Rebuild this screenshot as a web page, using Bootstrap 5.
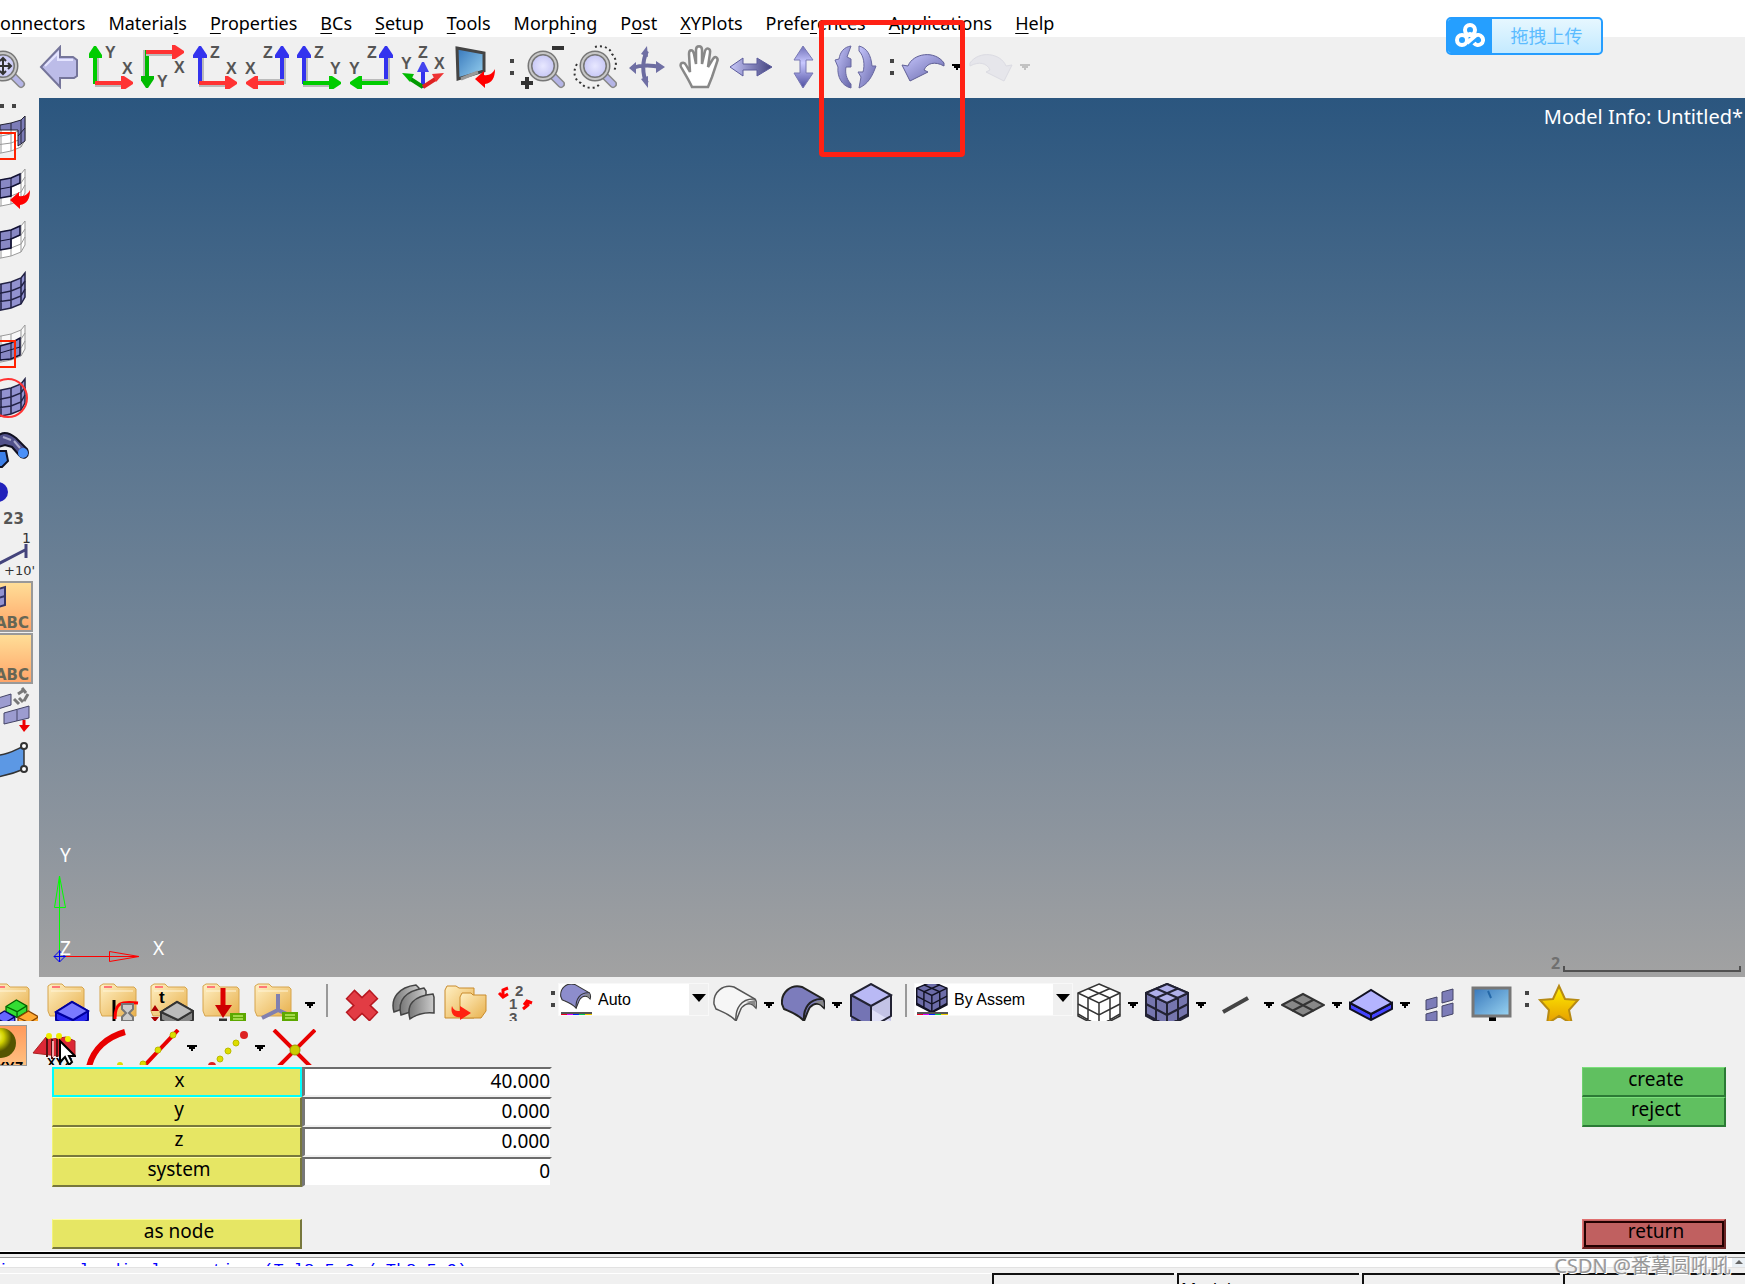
<!DOCTYPE html>
<html lang="en">
<head>
<meta charset="utf-8">
<meta name="viewport" content="width=device-width, initial-scale=1">
<title>Model Info: Untitled*</title>
<link href="https://cdn.jsdelivr.net/npm/bootstrap@5.3.0/dist/css/bootstrap.min.css" rel="stylesheet">
<style>
  body{font-family:"Noto Sans","Noto Sans CJK SC",sans-serif;font-size:18px;line-height:24px;color:#000;background:#f0f0f0}
  svg{display:block;flex:none;overflow:hidden}
  svg text{font-family:"Liberation Sans",sans-serif;font-weight:700}
  .menus{height:37px;gap:23px;padding-top:5px}
  .menus a{color:#000;text-decoration:none;padding:6px 0 0;line-height:24px;white-space:nowrap}
  .menus u{text-underline-offset:3px;text-decoration-thickness:1px}
  .views{height:61px;margin-left:-19px;padding-bottom:2px}
  .tool,.caret{border:0;background:none;padding:0;display:flex;justify-content:center;align-items:center;flex:none}
  .tool{width:52px}
  .caret{width:16px}
  .grip{width:15px;flex:none;display:flex;flex-direction:column;align-items:center;justify-content:center;gap:8px;padding-left:5px}
  .views .grip{width:16px}
  .grip i{width:4px;height:4px;background:#444}
  .side{width:39px;flex:none}
  .side .grip{width:39px;height:15px;flex-direction:row;justify-content:flex-start;padding:0;gap:8px}
  .side .tool{width:39px;height:52px}
  .side svg text{font-family:"DejaVu Sans",sans-serif}
  .stage{background:linear-gradient(#2b567f 0,#5b7690 40%,#8d959e 84%,#a2a2a2 100%)}
  .model-name{color:#fff;font-size:20px;padding:7px 2px}
  .triad{position:absolute;left:1px;bottom:1px}
  .triad text,.ruler text{font-family:"Noto Sans",sans-serif;font-weight:400}
  .ruler{position:absolute;right:4px;bottom:0}
  .upload{position:absolute;top:17px;right:142px;width:157px;height:38px;border:2px solid #259dff;border-radius:5px;background:linear-gradient(#e6f7ff,#c4eaff);color:#5cbcff;padding:0;overflow:hidden}
  .upload .logo{width:44px;height:100%;background:#259fff}
  .marker{position:absolute;left:819px;top:20px;width:146px;height:137px;border:5px solid #ff2114;border-radius:4px;pointer-events:none}
  .display{height:44px;margin-left:-10px;padding-top:6px}
  .create-nodes{height:46px;padding-top:8px}
  .display .tool,.create-nodes .tool{align-items:flex-start}
  .divider{width:17px;flex:none}
  .divider i{display:block;width:2px;height:33px;margin:1px auto;background:#999}
  .combo{height:33px;background:#fff;flex:none;border:1px solid #f8f8f8}
  .combo select{border:0;background:#fff;font:16px/30px "Liberation Sans",sans-serif;appearance:none;padding:1px 0 0 4px;flex:1;min-width:0;color:#000}
  .combo .drop{width:19px;background:#f0f0f0}
  .pressed{width:27px;height:41px;margin-top:-4px;border:1px solid #999;border-left:0;background:linear-gradient(#ff9a5c,#ffc080);flex:none;padding:0;margin-right:1px}
  .fields{padding:0 19px 0 52px;height:182px}
  .key,.value{width:250px;height:30px;font-size:19px;line-height:22px}
  .key{padding:0 0 6px 5px;border:solid;border-width:1px 2px 2px 1px;background:#e6e664;border-color:#ffffa0 #77773c #77773c #f2f278;color:#000}
  .key.active{border:2px solid #0ff}
  .key.go{width:144px;background:#60c060;border-color:#7be07b #2b7a35 #2b7a35 #70d070}
  .key.back{width:144px;background:#c06060;border-color:#e07070 #6b2525 #6b2525 #e07070;outline:2px solid #200;outline-offset:-4px}
  .value{border:solid;border-width:2px 2px 2px 3px;border-color:#6c6c6c #f0f0f0 #f0f0f0 #777;background:#fff;text-align:right;padding:0 0 2px;color:#000}
  .console{height:21px;border-top:2px solid #000;margin-top:3px;outline:1px solid #fff;flex:none}
  .log{margin-top:3px;height:11px;border-top:1px solid #999;border-bottom:1px solid #e2e2e2;background:#fff;overflow:hidden;color:#00f;font:17px/20px "Liberation Mono",monospace;white-space:pre}
  .log div{height:8px;padding-top:3px;margin-left:-2px;overflow:hidden}
  .log .up{width:13px;height:9px;background:#eaf0f5;flex:none}
  .status{height:11px;overflow:hidden;flex:none;gap:3px;font-size:17px}
  .status div{border-top:2px solid #111;border-left:2px solid #111;height:40px;padding:4px 2px;line-height:20px;flex:none;width:182px}
  .status .wide{width:198px}
  .status .plain{border:0;flex:1}
  .mark-text{position:absolute;right:14px;bottom:6px;color:rgba(140,140,140,.9);font-size:20px;line-height:24px;text-shadow:1px 1px 0 #fff,-1px 0 0 #ddd;white-space:nowrap;pointer-events:none}
</style>
<script src="https://cdn.jsdelivr.net/npm/bootstrap@5.3.0/dist/js/bootstrap.bundle.min.js"></script>
</head>
<body>
<svg width="0" height="0" class="position-absolute" aria-hidden="true">
  <defs>
    <linearGradient id="lav" x1="0" y1="0" x2="1" y2="1"><stop offset="0" stop-color="#c9c9ff"/><stop offset="1" stop-color="#6565a8"/></linearGradient>
    <linearGradient id="lavdark" x1="0" y1="0" x2="1" y2="0"><stop offset="0" stop-color="#c8c8fa"/><stop offset="1" stop-color="#43437f"/></linearGradient>
    <linearGradient id="lavdown" x1="0" y1="0" x2="0" y2="1"><stop offset="0" stop-color="#7070b8"/><stop offset=".4" stop-color="#c8c8ff"/><stop offset="1" stop-color="#4e4ea0"/></linearGradient>
    <linearGradient id="paper" x1="0" y1="0" x2="1" y2="1"><stop offset="0" stop-color="#fff0c4"/><stop offset="1" stop-color="#e8b04c"/></linearGradient>
    <linearGradient id="screen" x1="0" y1="0" x2="1" y2="1"><stop offset="0" stop-color="#3676ba"/><stop offset="1" stop-color="#9ad4f2"/></linearGradient>
    <linearGradient id="gold" x1="0" y1="0" x2="0" y2="1"><stop offset="0" stop-color="#fff000"/><stop offset="1" stop-color="#e59a00"/></linearGradient>
    <linearGradient id="steel" x1="0" y1="0" x2="1" y2="0"><stop offset="0" stop-color="#777"/><stop offset="1" stop-color="#ccc"/></linearGradient>
    <linearGradient id="peach" x1="0" y1="0" x2="0" y2="1"><stop offset="0" stop-color="#ffdf98"/><stop offset="1" stop-color="#ffa468"/></linearGradient>
    <radialGradient id="lens"><stop offset="0" stop-color="#e8e8ff"/><stop offset="1" stop-color="#c3c3f4"/></radialGradient>
    <radialGradient id="ball" cx=".35" cy=".3"><stop offset="0" stop-color="#ffff70"/><stop offset=".5" stop-color="#d0d000"/><stop offset="1" stop-color="#555500"/></radialGradient>
    <!-- a right-pointing arrow, origin at its tail -->
    <g id="ar"><path d="M0 4H28V2H0z" fill="#bbb"/><path d="M0 2H28V-2H0z"/><path d="M26-7H29L38-1V1L29 7H26z"/></g>
    <g id="glass"><path d="M29 30l9 9" stroke="#888" stroke-width="8" stroke-linecap="round"/><path d="M31 32l7 7" stroke="#b5b5e6" stroke-width="5" stroke-linecap="round"/><circle cx="20" cy="21" r="13" fill="url(#lens)" stroke="#777" stroke-width="5"/><circle cx="20" cy="21" r="13" fill="none" stroke="#c8c8c8" stroke-width="2"/></g>
    <g id="gridlines"><path d="M-4 16L11 13 21 9 25 4V28L21 35 11 39-4 42z"/><path d="M11 13V39M21 9V35M-4 25L11 22 21 18 25 12M-4 33L11 31 21 27 25 20M1 15V41" fill="none"/></g>
    <g id="folder"><path d="M1 3L4 1h11l3 3h17l2 2v27H3L1 28z" fill="url(#paper)" stroke="#d6a44c"/><path d="M5 4h8" stroke="#f77" stroke-width="2"/><path d="M4 8h30" stroke="#fff5d8"/></g>
    <g id="block"><path d="M0 10L16 0 32 9V18L17 27 0 18z"/><path d="M0 10L17 18 32 9M17 18V27" fill="none"/></g>
    <g id="cubes"><path d="M22 1L43 10V33L22 44 1 33V10z"/><path d="M1 10L22 20 43 10M22 20V44M1 21L22 32 43 21M11 5.500L33 15V39M33 5.500L11 15V39M1 31L22 43 43 31" fill="none"/></g>
    <g id="curve"><path d="M1 19C0 7 10 -1 21 2L42 14C44 17 44 20 43 23L40 20C35 17 29 20 27 26L23 36C17 29 10 27 3 24z"/><path d="M23 36C22 24 28 13 42 14" fill="none"/><path d="M33 17l9-2 1 7-4-3z" fill="#888" stroke="none"/></g>
    <path id="redhook" d="M0 10L9 2V6C14 7 18 4 20 0 20 9 17 14 10 15V19z" fill="#f00"/>
    <path id="tri" d="M0 0H10V2H8V4H6V6H4V4H2V2H0z"/>
    <g id="green2"><rect width="16" height="9" fill="#5da800"/><path d="M3 3h10M3 6h10" stroke="#b8e860" stroke-width="1.500"/></g>
    <g id="rainbow"><path d="M2 29H33" stroke="#555" stroke-width="2"/><path d="M2 30.500H8" stroke="#e02"/><path d="M8 30.500H14" stroke="#d0f"/><path d="M14 30.500H20" stroke="#02f"/><path d="M20 30.500H26" stroke="#0c5"/><path d="M26 30.500H33" stroke="#ec0"/></g>
  </defs>
</svg>

<div class="vh-100 d-flex flex-column overflow-hidden position-relative">
  <nav class="menus d-flex bg-white" aria-label="Main menu">
    <a href="#">o<u>n</u>nectors</a><a href="#">Materia<u>l</u>s</a><a href="#"><u>P</u>roperties</a><a href="#"><u>B</u>Cs</a><a href="#"><u>S</u>etup</a><a href="#"><u>T</u>ools</a><a href="#">Morph<u>i</u>ng</a><a href="#">P<u>o</u>st</a><a href="#"><u>X</u>YPlots</a><a href="#">Prefe<u>r</u>ences</a><a href="#"><u>A</u>pplications</a><a href="#"><u>H</u>elp</a>
  </nav>

  <div class="views d-flex flex-shrink-0">
    <button class="tool" aria-label="Zoom fit"><svg width="44" height="44"><use href="#glass" x="-2"/><path d="M18 13v16M10 21h16M15 16l3-3 3 3M23 18l3 3-3 3M15 26l3 3 3-3" fill="none" stroke="#333" stroke-width="2"/></svg></button>
    <button class="tool" aria-label="Previous view"><svg width="44" height="44"><path d="M4 22L23 2V12H36L40 15V31L37 33H23V42z" fill="#bcbce8" stroke="#75759a" stroke-width="2"/><path d="M8 21L21 8V15H36" fill="none" stroke="#e5e5ff" stroke-width="2"/></svg></button>
    <button class="tool" aria-label="XY top view"><svg width="44" height="44"><use href="#ar" transform="translate(6,39) rotate(-90)" fill="#0c0"/><use href="#ar" x="6" y="38" fill="#f33"/><text x="16" y="13" font-size="16" fill="#555">Y</text><text x="33" y="29" font-size="16" fill="#555">X</text></svg></button>
    <button class="tool" aria-label="XY bottom view"><svg width="44" height="44"><use href="#ar" transform="translate(6,5) rotate(90)" fill="#0b0"/><use href="#ar" x="5" y="7" fill="#f33"/><text x="16" y="42" font-size="16" fill="#555">Y</text><text x="33" y="28" font-size="16" fill="#555">X</text></svg></button>
    <button class="tool" aria-label="XZ left view"><svg width="44" height="44"><use href="#ar" transform="translate(7,39) rotate(-90)" fill="#33e"/><use href="#ar" x="6" y="38" fill="#f33"/><text x="17" y="13" font-size="16" fill="#555">Z</text><text x="33" y="29" font-size="16" fill="#555">X</text></svg></button>
    <button class="tool" aria-label="XZ right view"><svg width="44" height="44"><use href="#ar" transform="translate(37,39) rotate(-90)" fill="#33e"/><use href="#ar" transform="translate(39,38) rotate(180)" fill="#f33"/><text x="18" y="13" font-size="16" fill="#555">Z</text><text x="0" y="29" font-size="16" fill="#555">X</text></svg></button>
    <button class="tool" aria-label="YZ front view"><svg width="44" height="44"><use href="#ar" transform="translate(7,39) rotate(-90)" fill="#33e"/><use href="#ar" x="6" y="38" fill="#0c0"/><text x="17" y="13" font-size="16" fill="#555">Z</text><text x="33" y="29" font-size="16" fill="#555">Y</text></svg></button>
    <button class="tool" aria-label="YZ rear view"><svg width="44" height="44"><use href="#ar" transform="translate(37,39) rotate(-90)" fill="#33e"/><use href="#ar" transform="translate(39,38) rotate(180)" fill="#0c0"/><text x="18" y="13" font-size="16" fill="#555">Z</text><text x="0" y="29" font-size="16" fill="#555">Y</text></svg></button>
    <button class="tool" aria-label="Isometric view"><svg width="44" height="44"><path d="M22 43V26" stroke="#33e" stroke-width="4"/><path d="M16 27l5-10h2l5 10z" fill="#44e"/><path d="M22 42L8 33" stroke="#090" stroke-width="4"/><path d="M1 28l12 1-4 8z" fill="#0b0"/><path d="M22 42L36 33" stroke="#d22" stroke-width="4"/><path d="M43 28l-12 1 4 8z" fill="#e33"/><text x="0" y="24" font-size="16" fill="#555">Y</text><text x="17" y="13" font-size="16" fill="#555">Z</text><text x="33" y="24" font-size="16" fill="#555">X</text></svg></button>
    <button class="tool" aria-label="User views"><svg width="44" height="44"><path d="M4 3L31 8V26L5 34z" fill="url(#screen)" stroke="#444" stroke-width="3"/><path d="M8 34l17-7" stroke="#999" stroke-width="3"/><use href="#redhook" x="22" y="24"/></svg></button>
    <span class="grip"><i></i><i></i></span>
    <button class="tool" aria-label="Zoom in or out"><svg width="44" height="44"><use href="#glass" x="2"/><path d="M31 3H43M0 38H12M6 32V44" stroke="#333" stroke-width="4"/></svg></button>
    <button class="tool" aria-label="Circle zoom"><svg width="44" height="44"><use href="#glass" x="2"/><path d="M22 2C28 0 37 2 39 9 44 14 44 22 40 27M4 19C-1 27 2 36 8 38 12 44 24 45 27 38" fill="none" stroke="#333" stroke-width="2" stroke-dasharray="2 3"/></svg></button>
    <button class="tool" aria-label="Rotate"><svg width="44" height="44"><path d="M22 6C17 16 17 30 22 38M7 23C15 20 27 20 36 22" fill="none" stroke="#6c6ca0" stroke-width="4"/><path d="M16 9L22 1 23 12zM16 34l7 9V31zM11 17L4 23l7 6zM31 16l9 6-9 6z" fill="#6f6fa4"/></svg></button>
    <button class="tool" aria-label="Pan"><svg width="44" height="44"><path d="M15 42C12 35 8 29 4 22 2 18 7 16 9 20L13 27 12 9C12 4 16 4 17 9L19 19V5C19 0 25 0 25 5V19L28 6C29 2 34 3 33 8L31 22 36 14C38 10 42 13 40 17L35 32 31 42z" fill="#fff" stroke="#888" stroke-width="2.500"/></svg></button>
    <button class="tool" aria-label="Rotate horizontally"><svg width="44" height="44"><path d="M1 22L14 13V19H28V13L43 22 28 31V25H14V31z" fill="url(#lavdark)" stroke="#5c5c9c"/></svg></button>
    <button class="tool" aria-label="Rotate vertically"><svg width="44" height="44"><path d="M22 1L32 15H25V28H32L22 43 13 28H19V15H13z" fill="url(#lavdown)" stroke="#7878b4"/></svg></button>
    <button class="tool" aria-label="Spin"><svg width="44" height="44"><path d="M18 1C11 2 7 7 6 14L2 15 5 22C4 32 9 41 18 43V39C13 34 12 27 13 22H18V14L14 12z" fill="url(#lav)" stroke="#6868a0"/><path d="M26 1C34 3 38 10 39 21L43 21C39 32 35 39 26 43L28 32 25 27H30C32 20 31 11 26 6z" fill="url(#lav)" stroke="#6868a0"/></svg></button>
    <span class="grip"><i></i><i></i></span>
    <button class="tool" aria-label="Undo"><svg width="44" height="44"><path d="M1 20L7 21C12 8 34 5 43 18V21C34 16 26 18 23 25L27 27 9 36z" fill="url(#lav)" stroke="#5f5f95"/></svg></button>
    <button class="caret" aria-label="Undo list"><svg width="10" height="6"><use href="#tri"/></svg></button>
    <button class="tool" aria-label="Redo"><svg width="44" height="44" opacity=".7"><path d="M43 20L37 21C32 8 10 5 1 18V21C10 16 18 18 21 25L17 27 35 36z" fill="#e2e2ea" stroke="#d3d3dd"/></svg></button>
    <button class="caret" aria-label="Redo list"><svg width="10" height="6" fill="#c2c2c2"><use href="#tri"/></svg></button>
  </div>

  <div class="d-flex flex-grow-1 overflow-hidden">
    <div class="side d-flex flex-column">
      <span class="grip"><i></i><i></i></span>
      <button class="tool" aria-label="Mask"><svg width="39" height="52"><g transform="translate(0,-1)" fill="#fff" stroke="#999"><use href="#gridlines"/></g><path d="M0 12L11 10 21 7 25 3V28L18 33V17H0z" fill="#7c7cb8" stroke="#223"/><path d="M11 10V17M21 7V30M18 23L25 15" stroke="#223"/><path d="M-2 20H15V46H-2" fill="none" stroke="#f20" stroke-width="2"/></svg></button>
      <button class="tool" aria-label="Reverse mask"><svg width="39" height="52"><g fill="#fff" stroke="#999"><use href="#gridlines"/></g><path d="M0 15L11 13 20 9V18L11 22V31L0 33z" fill="#8888c4" stroke="#113" stroke-width="1.500"/><path d="M11 13V31M0 24L11 22" stroke="#113"/><use href="#redhook" x="10" y="25"/></svg></button>
      <button class="tool" aria-label="Unmask adjacent"><svg width="39" height="52"><g fill="#fff" stroke="#999"><use href="#gridlines"/></g><path d="M0 15L11 13 20 9V18L11 22V31L0 33z" fill="#8888c4" stroke="#113" stroke-width="1.500"/><path d="M11 13V31M0 24L11 22" stroke="#113"/></svg></button>
      <button class="tool" aria-label="Unmask all"><svg width="39" height="52"><g fill="#9292d0" stroke="#224" stroke-width="1.500"><use href="#gridlines"/></g></svg></button>
      <button class="tool" aria-label="Mask outside"><svg width="39" height="52"><g fill="#f8f8f8" stroke="#999"><use href="#gridlines"/></g><path d="M0 25L11 22 20 17V34L11 38 0 39z" fill="#8888c4" stroke="#113" stroke-width="1.500"/><path d="M11 22V38M0 32L20 26" stroke="#113"/><path d="M-2 20H15V46H-2" fill="none" stroke="#f20" stroke-width="2"/></svg></button>
      <button class="tool" aria-label="Spherical clipping"><svg width="39" height="52"><g transform="translate(0,2)" fill="#9292d0" stroke="#224" stroke-width="1.500"><use href="#gridlines"/></g><circle cx="8" cy="25" r="19" fill="none" stroke="#f33" stroke-width="2"/></svg></button>
      <button class="tool" aria-label="Find"><svg width="39" height="52"><path d="M-2 11C4 5 11 9 16 13L27 24C30 31 24 36 19 30L12 22 5 20-2 22z" fill="#50508a" stroke="#112" stroke-width="2"/><circle cx="23" cy="28" r="5" fill="#4a90f8"/><path d="M-2 26H6L8 36 2 42H-2z" fill="#3d80e8" stroke="#112" stroke-width="2"/><path d="M3 12l8 3M14 16l6 7" stroke="#aac" stroke-width="2"/></svg></button>
      <button class="tool" aria-label="Node numbers"><svg width="39" height="52"><circle cx="-2" cy="15" r="10" fill="#22b"/><text x="3" y="47" font-size="15" fill="#555">23</text></svg></button>
      <button class="tool" aria-label="Load labels"><svg width="39" height="52"><path d="M-2 35L27 20M26 15V29" stroke="#44447c" stroke-width="3"/><text x="22" y="14" font-size="14" fill="#333" style="font-weight:400">1</text><text x="4" y="46" font-size="13" fill="#333" style="font-weight:400">+10'</text></svg></button>
      <button class="tool" aria-label="Element labels"><svg width="39" height="52"><path d="M-2 1H32V50H-2z" fill="url(#peach)" stroke="#999" stroke-width="2"/><path d="M-2 8L5 6V24L-2 26M-2 17L5 15" fill="#9292d0" stroke="#336" stroke-width="2"/><text x="-5" y="47" font-size="15" fill="#665">ABC</text></svg></button>
      <button class="tool" aria-label="Component labels"><svg width="39" height="52"><path d="M-2 1H32V50H-2z" fill="url(#peach)" stroke="#999" stroke-width="2"/><text x="-5" y="47" font-size="15" fill="#665">ABC</text></svg></button>
      <button class="tool" aria-label="Reorder"><svg width="39" height="52"><path d="M-2 13L11 9V20L-2 24zM4 28L29 21V33L4 39zM17 25V36" fill="#9c9cd0" stroke="#446"/><path d="M18 9l6-4M22 3l4 5M28 9l-4 7M14 14l5 5M19 13l4 4" fill="none" stroke="#777" stroke-width="3"/><path d="M24 35V42" stroke="#e00" stroke-width="3"/><path d="M19 40H30L24 47z" fill="#e00"/></svg></button>
      <button class="tool" aria-label="Surface handles"><svg width="39" height="52"><path d="M-2 18C8 18 15 13 24 9V32C15 36 8 38-2 40z" fill="#5c98e4" stroke="#333" stroke-width="1.500"/><circle cx="24" cy="9" r="3" fill="#fff" stroke="#333" stroke-width="2"/><circle cx="24" cy="32" r="3" fill="#fff" stroke="#333" stroke-width="2"/></svg></button>
    </div>
    <main class="stage flex-grow-1 position-relative text-end">
      <div class="model-name">Model Info: Untitled*</div>
      <svg class="triad" width="150" height="140" fill="none" text-anchor="start"><path d="M19.500 120V40L14.500 71.500H25.500L19.500 40" stroke="#0f0"/><path d="M20 120.500H99L69.500 115.500V125.500L99 120.500" stroke="#f00"/><path d="M19.500 115L25 120.500 19.500 126 14 120.500zM14 120.500H26M19.500 114V126" stroke="#00e"/><g fill="#fff" font-size="19"><text x="20" y="26">Y</text><text x="20" y="119">Z</text><text x="113" y="119">X</text></g></svg>
      <svg class="ruler" width="190" height="24"><text x="0" y="16" font-size="16" fill="#707070" style="font-weight:700">2</text><path d="M13 13V18H189V13" fill="none" stroke="#505050" stroke-width="2"/></svg>
    </main>
  </div>

  <div class="display d-flex flex-shrink-0">
    <button class="tool" aria-label="Assembly"><svg width="44" height="38"><use href="#folder" x="-2"/><g transform="translate(12,17) scale(.65)" fill="#3d3" stroke="#060" stroke-width="2"><use href="#block"/></g><g transform="translate(0,28) scale(.65)" fill="#66f" stroke="#006" stroke-width="2"><use href="#block"/></g><g transform="translate(24,28) scale(.65)" fill="#fa3" stroke="#840" stroke-width="2"><use href="#block"/></g></svg></button>
    <button class="tool" aria-label="Component"><svg width="44" height="38"><use href="#folder" x="1"/><g transform="translate(10,19)" fill="#2a2af0" stroke="#0000a0" stroke-width="2"><use href="#block"/><path d="M0 10L16 0 32 9 17 18z" fill="#7a7aff"/></g></svg></button>
    <button class="tool" aria-label="Material"><svg width="44" height="38"><use href="#folder" x="1"/><path d="M16 38V17" stroke="#000" stroke-width="3"/><path d="M17 36C17 20 22 18 40 20" fill="none" stroke="#f00" stroke-width="3"/><path d="M24 21h11v5l-4 4 4 4v4H24v-4l4-4-4-4z" fill="#ccc" stroke="#777" stroke-width="2"/></svg></button>
    <button class="tool" aria-label="Property"><svg width="44" height="38"><use href="#folder"/><text x="9" y="20" font-size="17" fill="#000">t</text><path d="M5 22l4 6H1zM1 34h8l-4 5z" fill="#a00"/><g transform="translate(11,19)" fill="#888" stroke="#333" stroke-width="2"><use href="#block"/><path d="M0 10L16 0 32 9 17 18z" fill="#bbb"/></g></svg></button>
    <button class="tool" aria-label="Load collector"><svg width="44" height="38"><use href="#folder"/><path d="M21 5V25" stroke="#d00" stroke-width="5"/><path d="M13 22H30L21 35z" fill="#c00"/><path d="M17 37h8" stroke="#333" stroke-width="3"/><use href="#green2" x="28" y="30"/></svg></button>
    <button class="tool" aria-label="System collector"><svg width="44" height="38"><use href="#folder"/><path d="M24 11V27L8 35M24 27L35 32" fill="none" stroke="#8080b0" stroke-width="4"/><use href="#green2" x="28" y="29"/></svg></button>
    <button class="caret" aria-label="More collectors"><svg width="10" height="44"><use href="#tri" y="22"/></svg></button>
    <span class="divider"><i></i></span>
    <button class="tool" aria-label="Delete"><svg width="44" height="38"><path d="M11 11L35 34M35 11L11 34" stroke="#b81820" stroke-width="13"/><path d="M12 12L34 33M34 12L12 33" stroke="#e23c44" stroke-width="10"/></svg></button>
    <button class="tool" aria-label="Card edit"><svg width="44" height="38" stroke="#444" stroke-width="1.500" fill="url(#steel)"><path d="M3 29C-1 15 8 4 25 2L28 5V20z"/><path d="M10 32C6 17 15 8 33 5L35 8V24z"/><path d="M19 36C15 22 22 13 42 11L43 14V30C34 29 26 31 19 36z"/></svg></button>
    <button class="tool" aria-label="Organize"><svg width="44" height="38"><path d="M2 7L4 3H13L16 5H31V35H2z" fill="url(#paper)" stroke="#c98b2c"/><path d="M17 14L19 10H28L30 12H43V28L38 35H17z" fill="url(#paper)" stroke="#c98b2c"/><path d="M9 23C11 28 14 28 17 28V23L28 30 17 37V34C11 35 7 30 9 23z" fill="#f21"/></svg></button>
    <button class="tool" aria-label="Renumber"><svg width="44" height="38"><text x="20" y="13" font-size="15" fill="#555">2</text><text x="14" y="26" font-size="15" fill="#555">1</text><text x="14" y="40" font-size="15" fill="#555">3</text><path d="M13 5L8 7V12M4 10l4 4 5-3M29 22l3-4 5 2M33 17V22l-5 4" fill="none" stroke="#f00" stroke-width="3"/></svg></button>
    <span class="grip justify-content-start pt-2"><i></i><i></i></span>
    <div class="combo d-flex" style="width:151px"><svg width="35" height="31"><g transform="translate(1,-1) scale(.7)" fill="#8d8dcc" stroke="#333" stroke-width="1.500"><use href="#curve"/></g><use href="#rainbow"/></svg>
      <select aria-label="Geometry colour mode"><option>Auto</option></select><span class="drop d-flex align-items-center justify-content-center pb-1"><svg width="14" height="8"><path d="M0 0H14L7 8z"/></svg></span></div>
    <button class="tool" aria-label="Wireframe geometry"><svg width="44" height="38" fill="#f6f6f6" stroke="#555" stroke-width="1.500"><use href="#curve" y="2"/></svg></button>
    <button class="caret" aria-label="Wireframe options"><svg width="10" height="44"><use href="#tri" y="22"/></svg></button>
    <button class="tool" aria-label="Shaded geometry"><svg width="44" height="38" fill="#7c7cbc" stroke="#222" stroke-width="2"><use href="#curve" y="2"/></svg></button>
    <button class="caret" aria-label="Shading options"><svg width="10" height="44"><use href="#tri" y="22"/></svg></button>
    <button class="tool" aria-label="Transparency"><svg width="44" height="38"><path d="M2 12L22 1 42 12V38H2z" fill="#c3c3e6"/><path d="M2 12L22 23V38H2z" fill="#7474b4"/><path d="M22 26L42 38H22z" fill="#e0e0f8"/><path d="M2 12L22 23 42 12 22 1z" fill="#b9b9f5"/><path d="M2 12L22 23 42 12 22 1 2 12V33L14 40M42 12V33L30 40M22 23V38" fill="none" stroke="#223" stroke-width="2"/></svg></button>
    <span class="divider"><i></i></span>
    <div class="combo d-flex" style="width:159px"><svg width="35" height="31"><g transform="translate(1,-3) scale(.72)" fill="#6c6ca8" stroke="#112" stroke-width="2"><use href="#cubes"/></g><use href="#rainbow"/></svg>
      <select aria-label="Element colour mode"><option>By Assem</option></select><span class="drop d-flex align-items-center justify-content-center pb-1"><svg width="14" height="8"><path d="M0 0H14L7 8z"/></svg></span></div>
    <button class="tool" aria-label="Wireframe elements"><svg width="44" height="38" fill="#fff" stroke="#333" stroke-width="1.500"><use href="#cubes"/></svg></button>
    <button class="caret" aria-label="Element wire options"><svg width="10" height="44"><use href="#tri" y="22"/></svg></button>
    <button class="tool" aria-label="Shaded elements"><svg width="44" height="38" fill="#7676ae" stroke="#223" stroke-width="2"><use href="#cubes"/><path d="M22 1L43 10 22 20 1 10z" fill="#b0b0ea"/><path d="M11 5.500L33 15M33 5.500L11 15"/></svg></button>
    <button class="caret" aria-label="Element shade options"><svg width="10" height="44"><use href="#tri" y="22"/></svg></button>
    <button class="tool" aria-label="1D elements"><svg width="44" height="38"><path d="M10 29L35 15" stroke="#444" stroke-width="4"/></svg></button>
    <button class="caret" aria-label="1D options"><svg width="10" height="44"><use href="#tri" y="22"/></svg></button>
    <button class="tool" aria-label="2D elements"><svg width="44" height="38"><path d="M1 22L22 11 43 22 22 33zM11 16.500L33 28M33 16.500L11 28" fill="#888" stroke="#333" stroke-width="2"/></svg></button>
    <button class="caret" aria-label="2D options"><svg width="10" height="44"><use href="#tri" y="22"/></svg></button>
    <button class="tool" aria-label="3D elements"><svg width="44" height="38" stroke="#112" stroke-width="2"><path d="M1 20V26L22 37 43 26V20L22 31z" fill="#44f"/><path d="M1 20L22 7 43 20 22 31zM22 31V37" fill="#b4b4ff"/></svg></button>
    <button class="caret" aria-label="3D options"><svg width="10" height="44"><use href="#tri" y="22"/></svg></button>
    <button class="tool" aria-label="Shrink elements"><svg width="44" height="38" fill="#7c7cb8" stroke="#446"><path d="M9 17L20 14V24L9 27zM25 9L36 6V17L25 20zM25 23L36 20V31L25 34zM9 31L20 28V38H9z"/></svg></button>
    <button class="tool" aria-label="Visualization options"><svg width="44" height="38"><path d="M20 32h7v6h-7z"/><rect x="4" y="5" width="37" height="28" fill="url(#screen)" stroke="#777" stroke-width="3"/><path d="M19 8l3 7" stroke="#2468a8" stroke-width="2"/></svg></button>
    <span class="grip justify-content-start pt-2"><i></i><i></i></span>
    <button class="tool" aria-label="Favourites"><svg width="44" height="38"><path d="M23 3L29 16 42 17 33 27 36 41 23 33 11 41 13 27 4 17 17 16z" fill="url(#gold)" stroke="#b68a14" stroke-width="2"/></svg></button>
  </div>

  <div class="create-nodes d-flex flex-shrink-0">
    <button class="pressed" aria-label="XYZ node"><svg width="27" height="39"><circle cx="1" cy="17" r="15" fill="url(#ball)"/><text x="-4" y="46" font-size="14">XYZ</text></svg></button>
    <button class="tool" aria-label="On geometry"><svg width="44" height="36"><path d="M1 24L14 8 20 10 34 8 43 12V26L26 27z" fill="#dc2836" stroke="#a22"/><path d="M15 9V28M20 10V30M25 10V28" stroke="#511" stroke-width="2"/><path d="M21 12V28" stroke="#eaa" stroke-width="2"/><g fill="#ee0"><circle cx="17" cy="7" r="3"/><circle cx="27" cy="7" r="3"/><circle cx="36" cy="10" r="3"/></g><text x="15" y="38" font-size="13">XYZ</text><path d="M28 12V33L33 28 37 36 40 33 37 27H43z" fill="#fff" stroke="#000" stroke-width="2"/></svg></button>
    <button class="tool" aria-label="Arc centre"><svg width="44" height="36"><path d="M5 38C9 20 23 8 41 3" fill="none" stroke="#e80000" stroke-width="6"/><circle cx="36" cy="36" r="3" fill="#dd0"/></svg></button>
    <button class="tool" aria-label="Extract on line"><svg width="44" height="36"><path d="M9 36L42 1" stroke="#e80000" stroke-width="4"/><g fill="#dd0" stroke="#bb0"><circle cx="37" cy="6" r="3"/><circle cx="22" cy="21" r="3"/><circle cx="7" cy="35" r="3"/></g></svg></button>
    <button class="caret" aria-label="Line options"><svg width="10" height="34"><use href="#tri" y="14"/></svg></button>
    <button class="tool" aria-label="Between nodes"><svg width="44" height="36"><g fill="#dd0" stroke="#bb0"><circle cx="32" cy="14" r="3"/><circle cx="24" cy="22" r="3"/><circle cx="16" cy="30" r="3"/></g><circle cx="40" cy="6" r="4" fill="#d22"/><circle cx="8" cy="37" r="4" fill="#d22"/></svg></button>
    <button class="caret" aria-label="Between options"><svg width="10" height="34"><use href="#tri" y="14"/></svg></button>
    <button class="tool" aria-label="Intersect"><svg width="44" height="36"><path d="M2 1L41 40M43 1L4 40" stroke="#e80000" stroke-width="4"/><circle cx="23" cy="21" r="5" fill="#cc0" stroke="#990"/></svg></button>
  </div>

  <form class="fields d-flex justify-content-between flex-shrink-0" onsubmit="return false">
    <div class="d-flex flex-column justify-content-between pb-0">
      <div>
        <div class="d-flex"><button class="key active" type="button" id="kx">x</button><input class="value" aria-labelledby="kx" value="40.000"></div>
        <div class="d-flex"><button class="key" type="button" id="ky">y</button><input class="value" aria-labelledby="ky" value="0.000"></div>
        <div class="d-flex"><button class="key" type="button" id="kz">z</button><input class="value" aria-labelledby="kz" value="0.000"></div>
        <div class="d-flex"><button class="key" type="button" id="ks">system</button><input class="value" aria-labelledby="ks" value="0"></div>
      </div>
      <button class="key" type="button">as node</button>
    </div>
    <div class="d-flex flex-column justify-content-between">
      <div class="d-flex flex-column"><button class="key go" type="button">create</button><button class="key go" type="button">reject</button></div>
      <button class="key back" type="button">return</button>
    </div>
  </form>

  <div class="console"><div class="log d-flex justify-content-between"><div>in console display option (Tcl8.5.9 / Tk8.5.9)</div><span class="up"><svg width="13" height="8"><path d="M3 6L7 2 11 6z" fill="#666"/></svg></span></div></div>
  <div class="status d-flex">
    <div class="plain"></div><div></div><div>Model</div><div class="wide"></div><div></div>
  </div>

  <div class="mark-text">CSDN @番薯圆吼吼</div>
  <button class="upload d-flex align-items-center"><span class="logo d-flex align-items-center justify-content-center"><svg width="30" height="26" fill="none" stroke="#fff" stroke-width="4"><circle cx="15" cy="7" r="5"/><circle cx="7" cy="17" r="5"/><path d="M10 14L15 11 20 14M19 20A5 5 0 1 0 20 13L12 20"/></svg></span><span class="flex-grow-1">拖拽上传</span></button>
  <div class="marker"></div>
</div>
</body>
</html>
